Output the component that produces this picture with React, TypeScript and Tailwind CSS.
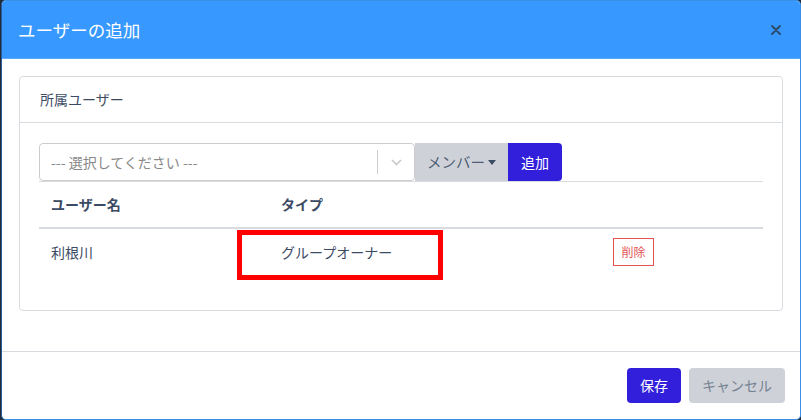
import React from 'react';

const font = { fontFamily: '"Noto Sans CJK JP", "Noto Sans", sans-serif' };

const App: React.FC = () => {
  return (
    <div className="w-[801px] h-[420px] bg-[#1f2a3a] overflow-hidden" style={font}>
      <div className="ml-px w-[800px] h-[420px] bg-white border border-[#3b8fe8] border-l-[#2a5d9a] rounded-[5px] overflow-hidden flex flex-col text-[#3c4b64]">
        {/* header */}
        <div className="h-[58px] shrink-0 bg-[#3799ff] border-b border-[#5aa9ff] flex items-center justify-between pl-[16px] pr-[19px]">
          <h1 className="text-white text-[17.5px] leading-none font-normal">ユーザーの追加</h1>
          <svg className="w-[10px] h-[10px]" viewBox="0 0 10 10" stroke="#2f4866" strokeWidth={1.8} strokeLinecap="round">
            <path d="M1 1l8 8M9 1l-8 8" />
          </svg>
        </div>

        {/* body */}
        <div className="px-[17px] pt-[17px] pb-[40px]">
          <div className="border border-[#d8dbe0] rounded-[4px]">
            <div className="h-[46px] px-[20px] flex items-center border-b border-[#d8dbe0] text-[14px]">
              所属ユーザー
            </div>
            <div className="px-[19px] pt-[20px] pb-[35px]">
              <div className="flex h-[38px]">
                <div className="w-[376px] border border-[#cccccc] rounded-[4px] flex items-center pl-[11px] text-[14px] text-[#888888]">
                  <span className="flex-1">--- 選択してください ---</span>
                  <span className="w-px h-[24px] bg-[#cccccc]" />
                  <span className="w-[36px] flex justify-center">
                    <svg className="w-[11px] h-[7px]" viewBox="0 0 11 7" fill="none" stroke="#c8c8c8" strokeWidth={1.6}>
                      <path d="M1 1l4.5 4.5L10 1" />
                    </svg>
                  </span>
                </div>
                <button className="w-[93px] bg-[#ced2d8] text-[#4f5d73] text-[14.5px] flex items-center justify-center gap-[3px]">
                  メンバー
                  <svg className="w-[8px] h-[5px]" viewBox="0 0 8 5" fill="#3c4b64">
                    <path d="M0 0h8L4 5z" />
                  </svg>
                </button>
                <button className="w-[54px] bg-[#321fdb] text-white text-[14px] rounded-r-[4px]">追加</button>
              </div>

              <div className="text-[14px]">
                <div className="grid grid-cols-[230px_332px_1fr] h-[48px] items-center border-t border-[#d8dbe0] border-b-2 font-bold">
                  <div className="pl-[12px]">ユーザー名</div>
                  <div className="pl-[12px]">タイプ</div>
                  <div />
                </div>
                <div className="relative grid grid-cols-[230px_332px_1fr] h-[46px] items-center">
                  <div className="pl-[12px]">利根川</div>
                  <div className="pl-[12px]">グループオーナー</div>
                  <div className="pl-[12px]">
                    <button className="w-[41px] h-[28px] border border-[#e55353] text-[#e55353] text-[12px]">削除</button>
                  </div>
                  <div className="absolute left-[198px] top-px w-[206px] h-[50px] border-[5px] border-[#ff0000]" />
                </div>
              </div>
            </div>
          </div>
        </div>

        {/* footer */}
        <div className="flex-1 border-t border-[#d8dbe0] flex justify-end items-start pt-[16px] pr-[15px] gap-[8px]">
          <button className="w-[54px] h-[35px] rounded-[4px] bg-[#321fdb] text-white text-[14px]">保存</button>
          <button className="w-[96px] h-[35px] rounded-[4px] bg-[#ced2d8] text-[#768192] text-[14px]">キャンセル</button>
        </div>
      </div>
    </div>
  );
};

export default App;
